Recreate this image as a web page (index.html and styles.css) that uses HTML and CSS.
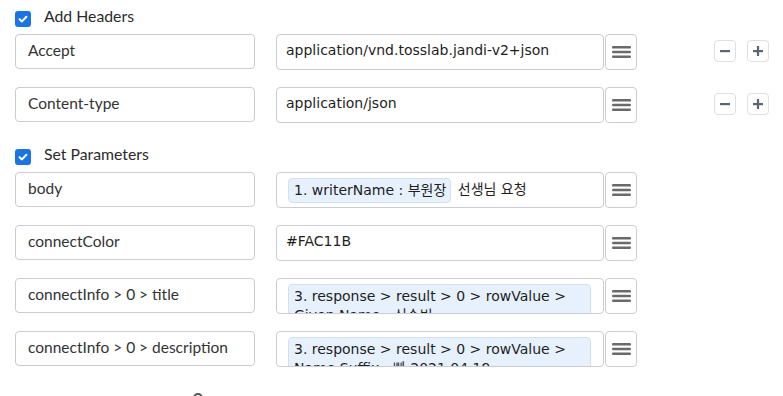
FILE: index.html
```html
<!DOCTYPE html>
<html lang="ko">
<head>
<meta charset="utf-8">
<link rel="stylesheet" href="styles.css">
</head>
<body>
<div class="page">
  <div class="section">
    <label class="section-head first">
      <span class="checkbox"><svg viewBox="0 0 16 16" width="16" height="16"><path d="M4.6 8.2 L7 10.4 L11.4 5.8" fill="none" stroke="#fff" stroke-width="2" stroke-linecap="round" stroke-linejoin="round"/></svg></span>
      <span class="head-text">Add Headers</span>
    </label>
    <div class="row">
      <div class="key">Accept</div>
      <div class="value plain">application/vnd.tosslab.jandi-v2+json</div>
      <button class="menu"><svg viewBox="0 0 19 12" width="19" height="12"><rect x="0" y="0" width="19" height="2.6" rx="1.2" fill="#6a6a6a"/><rect x="0" y="4.7" width="19" height="2.6" rx="1.2" fill="#6a6a6a"/><rect x="0" y="9.4" width="19" height="2.6" rx="1.2" fill="#6a6a6a"/></svg></button>
      <div class="actions">
        <button class="act"><svg viewBox="0 0 10 10" width="10" height="10"><rect x="0" y="4" width="10" height="2.2" fill="#5b6470"/></svg></button>
        <button class="act"><svg viewBox="0 0 10 10" width="10" height="10"><rect x="0" y="4" width="10" height="2.2" fill="#5b6470"/><rect x="3.9" y="0" width="2.2" height="10" fill="#5b6470"/></svg></button>
      </div>
    </div>
    <div class="row">
      <div class="key">Content-type</div>
      <div class="value plain">application/json</div>
      <button class="menu"><svg viewBox="0 0 19 12" width="19" height="12"><rect x="0" y="0" width="19" height="2.6" rx="1.2" fill="#6a6a6a"/><rect x="0" y="4.7" width="19" height="2.6" rx="1.2" fill="#6a6a6a"/><rect x="0" y="9.4" width="19" height="2.6" rx="1.2" fill="#6a6a6a"/></svg></button>
      <div class="actions">
        <button class="act"><svg viewBox="0 0 10 10" width="10" height="10"><rect x="0" y="4" width="10" height="2.2" fill="#5b6470"/></svg></button>
        <button class="act"><svg viewBox="0 0 10 10" width="10" height="10"><rect x="0" y="4" width="10" height="2.2" fill="#5b6470"/><rect x="3.9" y="0" width="2.2" height="10" fill="#5b6470"/></svg></button>
      </div>
    </div>
  </div>

  <div class="section">
    <label class="section-head">
      <span class="checkbox"><svg viewBox="0 0 16 16" width="16" height="16"><path d="M4.6 8.2 L7 10.4 L11.4 5.8" fill="none" stroke="#fff" stroke-width="2" stroke-linecap="round" stroke-linejoin="round"/></svg></span>
      <span class="head-text">Set Parameters</span>
    </label>
    <div class="row">
      <div class="key">body</div>
      <div class="value rich"><span class="chip">1. writerName : 부원장</span> 선생님 요청</div>
      <button class="menu"><svg viewBox="0 0 19 12" width="19" height="12"><rect x="0" y="0" width="19" height="2.6" rx="1.2" fill="#6a6a6a"/><rect x="0" y="4.7" width="19" height="2.6" rx="1.2" fill="#6a6a6a"/><rect x="0" y="9.4" width="19" height="2.6" rx="1.2" fill="#6a6a6a"/></svg></button>
    </div>
    <div class="row">
      <div class="key">connectColor</div>
      <div class="value plain">#FAC11B</div>
      <button class="menu"><svg viewBox="0 0 19 12" width="19" height="12"><rect x="0" y="0" width="19" height="2.6" rx="1.2" fill="#6a6a6a"/><rect x="0" y="4.7" width="19" height="2.6" rx="1.2" fill="#6a6a6a"/><rect x="0" y="9.4" width="19" height="2.6" rx="1.2" fill="#6a6a6a"/></svg></button>
    </div>
    <div class="row">
      <div class="key">connectInfo &gt; 0 &gt; title</div>
      <div class="value rich"><span class="chip">3. response &gt; result &gt; 0 &gt; rowValue &gt; Given Name : 신수빈</span></div>
      <button class="menu"><svg viewBox="0 0 19 12" width="19" height="12"><rect x="0" y="0" width="19" height="2.6" rx="1.2" fill="#6a6a6a"/><rect x="0" y="4.7" width="19" height="2.6" rx="1.2" fill="#6a6a6a"/><rect x="0" y="9.4" width="19" height="2.6" rx="1.2" fill="#6a6a6a"/></svg></button>
    </div>
    <div class="row">
      <div class="key">connectInfo &gt; 0 &gt; description</div>
      <div class="value rich"><span class="chip">3. response &gt; result &gt; 0 &gt; rowValue &gt; Name Suffix : 빠 2021.04.19</span></div>
      <button class="menu"><svg viewBox="0 0 19 12" width="19" height="12"><rect x="0" y="0" width="19" height="2.6" rx="1.2" fill="#6a6a6a"/><rect x="0" y="4.7" width="19" height="2.6" rx="1.2" fill="#6a6a6a"/><rect x="0" y="9.4" width="19" height="2.6" rx="1.2" fill="#6a6a6a"/></svg></button>
    </div>
  </div>
  <div class="footer"><span class="footer-icon"></span></div>
</div>
</body>
</html>
```

FILE: styles.css
```css
* { box-sizing: border-box; }
html, body { margin: 0; padding: 0; background: #fff; }
body { width: 783px; height: 396px; overflow: hidden; }

.page {
  padding-left: 15px;
  font-family: Lato, "Noto Sans", sans-serif;
  color: #333;
}

.section-head {
  display: flex;
  align-items: flex-start;
  height: 16px;
  margin: 26px 0 7px;
}
.section-head.first { margin-top: 11px; }

.checkbox {
  width: 16px;
  height: 16px;
  border-radius: 3px;
  background: #1b74e4;
  display: flex;
}

.head-text {
  margin-left: 13px;
  margin-top: -5px;
  font-size: 15.8px;
  line-height: 20px;
  color: #2b2b2b;
}

.row {
  display: flex;
  align-items: flex-start;
  height: 36px;
  margin-bottom: 17px;
}

.key {
  width: 240px;
  height: 35px;
  border: 1px solid #c9cdd3;
  border-radius: 4px;
  padding: 0 12px;
  font-size: 15.5px;
  line-height: 31px;
  color: #333;
}

.value {
  margin-left: 21px;
  width: 328px;
  height: 36px;
  border: 1px solid #c9cdd3;
  border-radius: 4px;
  font-family: "DejaVu Sans", Verdana, "Noto Sans CJK KR", sans-serif;
  font-size: 14px;
  color: #1e1e1e;
  overflow: hidden;
}
.value.plain {
  padding: 0 9px;
  line-height: 30px;
}
.value.rich {
  padding: 5px 10px 0 11px;
  line-height: 23px;
}

.chip {
  display: inline-block;
  background: #e6f1fd;
  border: 1px solid #d5e0ec;
  border-radius: 4px;
  padding: 2px 4px 2px 5px;
  line-height: 19px;
  vertical-align: top;
  margin-right: 2px;
}

.menu {
  margin: 0 0 0 1px;
  padding: 0;
  width: 32px;
  height: 36px;
  border: 1px solid #c9cdd3;
  border-radius: 4px;
  background: #fff;
  display: flex;
  align-items: center;
  justify-content: center;
}

.actions {
  display: flex;
  gap: 11px;
  margin-left: 77px;
  margin-top: 6px;
}
.act {
  margin: 0;
  padding: 0;
  width: 22px;
  height: 22px;
  border: 1px solid #dde0e4;
  border-radius: 4px;
  background: #fff;
  display: flex;
  align-items: center;
  justify-content: center;
}

.footer {
  padding-left: 178px;
  margin-top: 26px;
}
.footer-icon {
  display: block;
  width: 10px;
  height: 10px;
  border: 2px solid #555;
  border-radius: 50%;
}
```
